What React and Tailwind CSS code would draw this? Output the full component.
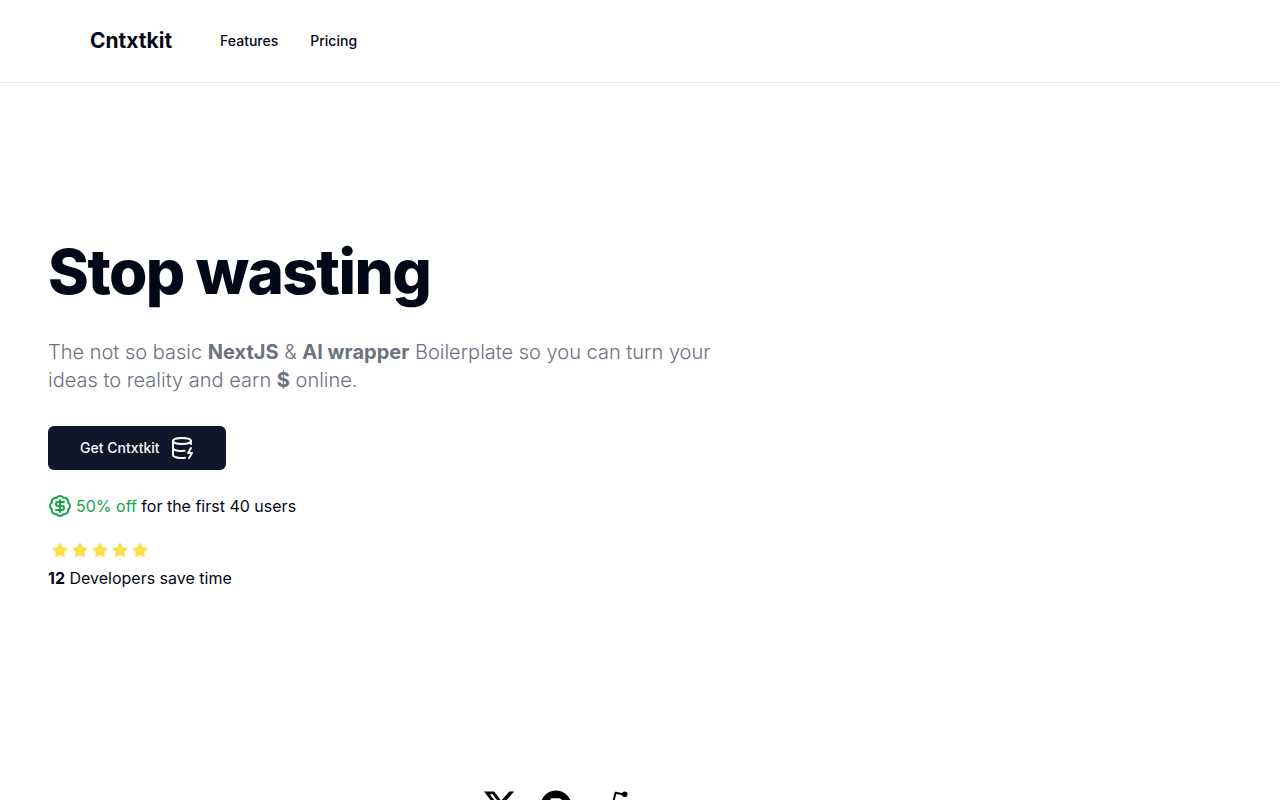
import React from 'react';
import { BadgeDollarSign, DatabaseZap } from 'lucide-react';
import { FaStar } from 'react-icons/fa';
import { FaProductHunt } from 'react-icons/fa6';
import { BsTwitterX } from 'react-icons/bs';

const RedditIcon = () => (
  <svg width="32" height="32" viewBox="0 0 32 32" fill="currentColor">
    <path
      d="M16.5 14.5 L19.6 2.8 L28 4.6"
      fill="none"
      stroke="currentColor"
      strokeWidth="2"
      strokeLinejoin="round"
    />
    <circle cx="28.7" cy="4.2" r="2.8" />
    <circle cx="4" cy="17" r="3.4" />
    <circle cx="28" cy="17" r="3.4" />
    <ellipse cx="16" cy="21" rx="13" ry="8.6" />
    <circle cx="11" cy="19.5" r="2" fill="white" />
    <circle cx="21" cy="19.5" r="2" fill="white" />
    <path d="M11 24.5 Q16 27.5 21 24.5" fill="none" stroke="white" strokeWidth="1.5" strokeLinecap="round" />
  </svg>
);

const Navbar = () => (
  <header className="border-b border-[#e2e8f0]">
    <div className="flex h-[82px] items-center px-[90px]">
      <a href="#" className="mr-12 text-[21px] font-bold">
        Cntxtkit
      </a>
      <nav className="flex gap-8 text-sm font-medium">
        <a href="#features">Features</a>
        <a href="#pricing">Pricing</a>
      </nav>
    </div>
  </header>
);

const Hero = () => (
  <section className="grid grid-cols-5 px-12 pt-[155px]">
    <div className="col-span-3">
      <h1 className="text-[62px] leading-[68px] font-extrabold tracking-tight">Stop wasting</h1>
      <p className="mt-8 max-w-[672px] text-xl leading-7 font-light text-[#6b7280]">
        The not so basic <b className="font-bold">NextJS</b> &amp;{' '}
        <b className="font-bold">AI wrapper</b> Boilerplate so you can turn your ideas to reality and
        earn <b className="font-bold">$</b> online.
      </p>
      <button
        type="button"
        className="mt-8 flex h-11 items-center gap-2.5 rounded-md bg-[#0f172a] px-8 text-sm font-medium text-[#f8fafc]"
      >
        Get Cntxtkit
        <DatabaseZap size={24} />
      </button>
      <div className="mt-6 flex items-center gap-1">
        <BadgeDollarSign size={24} className="text-[#16a34a]" />
        <p>
          <span className="text-[#16a34a]">50% off</span> for the first 40 users
        </p>
      </div>
      <div className="mt-6 flex gap-1 pl-1 text-[#fde047]">
        {[1, 2, 3, 4, 5].map((n) => (
          <FaStar key={n} size={16} />
        ))}
      </div>
      <p className="mt-2">
        <b className="font-bold">12</b> Developers save time
      </p>
    </div>
  </section>
);

const Featured = () => (
  <section className="grid grid-cols-2 pt-[200px] text-black">
    <div className="flex items-start justify-end gap-6 pr-3">
      <a href="#x" aria-label="X">
        <BsTwitterX size={32} />
      </a>
      <a href="#producthunt" aria-label="Product Hunt">
        <FaProductHunt size={32} />
      </a>
      <a href="#reddit" aria-label="Reddit">
        <RedditIcon />
      </a>
    </div>
  </section>
);

const App = () => (
  <div className="h-screen overflow-hidden bg-white font-['Inter',sans-serif] text-[#020817]">
    <Navbar />
    <Hero />
    <Featured />
  </div>
);

export default App;
